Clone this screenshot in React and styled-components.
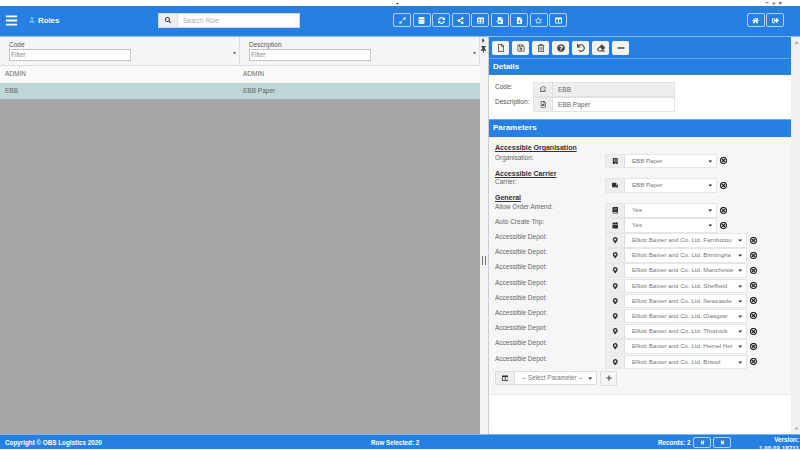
import styled, { createGlobalStyle } from 'styled-components'
import {
  FaBars, FaUser, FaSearch, FaExpandAlt, FaDatabase, FaSyncAlt, FaShareAlt, FaTable, FaFileImport,
  FaFileDownload, FaRegStar, FaColumns, FaHome, FaSignOutAlt, FaRegFile, FaRegSave, FaRegTrashAlt,
  FaQuestionCircle, FaUndo, FaEraser, FaMinus, FaRegCommentDots, FaRegFileAlt, FaBuilding, FaTruck,
  FaBook, FaCalendar, FaMapMarkerAlt, FaRegTimesCircle, FaPlus, FaStepBackward, FaStepForward,
  FaThumbtack, FaCaretRight, FaCaretDown, FaCaretUp,
} from 'react-icons/fa'

const BLUE = '#2680e3'

const GlobalStyle = createGlobalStyle`
  html, body { margin: 0; padding: 0; background: #fff; }
  body { font-family: "Liberation Sans", Arial, sans-serif; }
  * { box-sizing: border-box; }
`

const Page = styled.div`
  width: 800px;
  height: 450px;
  display: flex;
  flex-direction: column;
  overflow: hidden;
  color: #555;
  font-size: 7px;
`

const TopStrip = styled.div`
  height: 6px;
  flex: none;
  display: flex;
  align-items: center;
  padding: 0 18px 0 395px;
  justify-content: space-between;
  color: #333;
  font-size: 5px;

  svg { display: block; }
`

const WindowControls = styled.div`
  display: flex;
  gap: 3px;
  font-size: 6px;
  font-weight: bold;
  line-height: 6px;
`

const Header = styled.header`
  height: 31px;
  flex: none;
  background: ${BLUE};
  border-bottom: 1px solid #8dbbef;
  display: flex;
  align-items: center;
  color: #fff;
  padding: 0 16px 2px 5px;
`

const Burger = styled(FaBars)`
  font-size: 13px;
  width: 13px;
`

const Title = styled.div`
  margin-left: 11px;
  width: 129px;
  display: flex;
  align-items: center;
  gap: 3px;
  font-size: 7.8px;
  font-weight: bold;

  svg { color: #5cb8f5; font-size: 6px; }
`

const Search = styled.div`
  width: 142px;
  height: 15px;
  display: flex;
  background: #fff;
  border: 1px solid #d5d5d5;
`

const SearchAddon = styled.div`
  width: 19px;
  background: #eee;
  border-right: 1px solid #ddd;
  color: #333;
  font-size: 6px;
  display: flex;
  align-items: center;
  justify-content: center;
`

const SearchText = styled.div`
  padding-left: 5px;
  color: #aaa;
  font-size: 6.5px;
  line-height: 13px;
`

const HeaderTools = styled.div`
  margin-left: 93px;
  display: flex;
  gap: 1.5px;
`

const HeaderButton = styled.div`
  width: 18px;
  height: 14px;
  border: 1px solid #b5d3f5;
  border-radius: 2px;
  color: #fff;
  font-size: 7px;
  display: flex;
  align-items: center;
  justify-content: center;
`

const HeaderEnd = styled(HeaderTools)`
  margin-left: auto;
`

const Main = styled.main`
  flex: 1;
  min-height: 0;
  display: flex;
`

const LeftPane = styled.section`
  width: 480px;
  flex: none;
  background: #a6a6a6;
`

const TableHead = styled.div`
  height: 29px;
  background: #f5f5f5;
  border-bottom: 1px solid #ddd;
  display: grid;
  grid-template-columns: 240px 240px;
`

const HeadCell = styled.div`
  position: relative;
  padding: 4px 0 0 9px;
  border-right: 1px solid #ddd;
  font-size: 6.5px;
  line-height: 8px;
  color: #555;
`

const SortMark = styled(FaCaretUp)`
  position: absolute;
  right: 2px;
  top: 13px;
  font-size: 5px;
  color: #444;
`

const FilterInput = styled.div`
  width: 122px;
  height: 12px;
  border: 1px solid #c4c4c4;
  background: #fff;
  color: #888;
  font-size: 6.5px;
  line-height: 10px;
  padding-left: 1px;
`

const TableRow = styled.div`
  height: ${(p) => (p.$selected ? '16px' : '17px')};
  background: ${(p) => (p.$selected ? '#bdd7d7' : '#fafafa')};
  display: grid;
  grid-template-columns: 238px 242px;
  align-items: center;
  padding: 0 0 1.5px 5px;
  font-size: 6.5px;
  color: #666;
`

const Splitter = styled.div`
  width: 9px;
  flex: none;
  background: #f2f2f2;
  border-right: 1px solid #ccc;
  display: flex;
  flex-direction: column;
  align-items: center;
  padding: 0 1px 0 0;
  color: #444;
  font-size: 7px;
  gap: 2px;
`

const SplitHandle = styled.div`
  margin-top: 201px;
  width: 4px;
  height: 9px;
  border-left: 1px solid #777;
  border-right: 1px solid #777;
`

const Detail = styled.section`
  width: 302px;
  flex: none;
  display: flex;
  flex-direction: column;
`

const DetailTools = styled.div`
  height: 21px;
  flex: none;
  background: ${BLUE};
  display: flex;
  align-items: center;
  gap: 3px;
  padding: 0 3px;
`

const ToolButton = styled.div`
  width: 17px;
  height: 14px;
  background: #f4f4f4;
  border-radius: 2px;
  color: #444;
  font-size: 8px;
  display: flex;
  align-items: center;
  justify-content: center;
`

const SectionBar = styled.h2`
  margin: 0;
  flex: none;
  height: ${(p) => p.$height}px;
  background: ${BLUE};
  border-top: 1px solid #6aa8ec;
  color: #fff;
  font-size: 8px;
  font-weight: bold;
  line-height: ${(p) => p.$height - 2}px;
  padding-left: 4px;
`

const DetailsBody = styled.div`
  height: 44px;
  flex: none;
  background: #fff;
  padding: 7px 0 0 6px;
  display: grid;
  grid-template-columns: 38px 142px;
  grid-auto-rows: 15px;
  font-size: 6.5px;
`

const FieldLabel = styled.div`
  line-height: 8px;
  padding-top: 1px;
  white-space: nowrap;
`

const ReadField = styled.div`
  display: flex;
  border: 1px solid #e2e2e2;
  background: ${(p) => (p.$grey ? '#eee' : '#fff')};
  height: 15px;
`

const FieldIcon = styled.div`
  width: 19px;
  flex: none;
  background: #eee;
  border-right: 1px solid #ddd;
  display: flex;
  align-items: center;
  justify-content: center;
  color: #333;
  font-size: 6.5px;
`

const FieldValue = styled.div`
  padding-left: 5px;
  line-height: 13px;
  color: #666;
`

const ParamsBody = styled.div`
  flex: none;
  height: 257px;
  background: #f6f6f6;
  padding: 6px 0 0 6px;
  font-size: 6.5px;
`

const GroupHead = styled.div`
  height: ${(p) => p.$height}px;
  font-size: 7px;
  font-weight: bold;
  line-height: 9px;
  color: #333;
  text-decoration: underline;
`

const ParamRow = styled.div`
  height: ${(p) => (p.$depot ? '15.2px' : '15px')};
  display: flex;
  align-items: flex-start;
`

const ParamLabel = styled.div`
  width: 110px;
  flex: none;
  line-height: 8px;
  color: #666;
`

const ParamSelect = styled.div`
  width: ${(p) => (p.$wide ? '142px' : '112px')};
  height: 14.5px;
  flex: none;
  display: flex;
  border: 1px solid #e6e6e6;
  background: #fff;
`

const SelectText = styled.div`
  flex: 1;
  min-width: 0;
  margin-left: 7px;
  white-space: nowrap;
  line-height: 12.5px;
  color: #777;
  font-size: 6.15px;
`

const Caret = styled(FaCaretDown)`
  flex: none;
  align-self: center;
  margin-right: 3px;
  font-size: 6.5px;
  color: #333;
`

const Remove = styled(FaRegTimesCircle)`
  flex: none;
  margin: 3.5px 0 0 3px;
  font-size: 7px;
  color: #111;
  stroke: currentColor;
  stroke-width: 40px;
`

const AddRow = styled.div`
  display: flex;
  align-items: center;
  gap: 3px;
  margin-top: 1px;
`

const AddSelect = styled(ParamSelect)`
  width: 102px;
  border-color: #ddd;
`

const AddText = styled(SelectText)`
  margin-right: 2px;
  font-size: 6.3px;
`

const AddButton = styled.div`
  width: 17px;
  height: 15px;
  border: 1px solid #ddd;
  border-radius: 1px;
  background: #f6f6f6;
  color: #444;
  font-size: 6px;
  display: flex;
  align-items: center;
  justify-content: center;
`

const DetailRest = styled.div`
  flex: 1;
  background: #fff;
  border-top: 1px solid #e8e8e8;
`

const Scrollbar = styled.div`
  width: 10px;
  flex: none;
  background: #f1f1f1;
  display: flex;
  flex-direction: column;
  justify-content: space-between;
  align-items: center;
  padding: 2px 0;
  color: #aaa;
  font-size: 7px;
`

const Footer = styled.footer`
  height: 15px;
  flex: none;
  margin-bottom: 1px;
  background: ${BLUE};
  border-top: 1px solid #7db3ee;
  color: #fff;
  font-weight: bold;
  font-size: 6.3px;
  display: flex;
  align-items: center;
  padding-left: 5px;
  overflow: hidden;
`

const Copyright = styled.div`
  width: 366px;
`

const RowSelected = styled.div`
  width: 287px;
`

const Records = styled.div`
  width: 35px;
`

const PageButton = styled.div`
  width: 18px;
  height: 11px;
  margin-right: 2px;
  border: 1px solid #b5d3f5;
  border-radius: 2px;
  font-size: 5px;
  display: flex;
  align-items: center;
  justify-content: center;
`

const Version = styled.div`
  margin-left: auto;
  width: 66px;
  flex: none;
  align-self: flex-start;
  text-align: right;
  line-height: 9px;
  padding-right: 1px;
`

const mainTools = [FaExpandAlt, FaDatabase, FaSyncAlt, FaShareAlt, FaTable, FaFileImport, FaFileDownload, FaRegStar, FaColumns]
const detailTools = [FaRegFile, FaRegSave, FaRegTrashAlt, FaQuestionCircle, FaUndo, FaEraser, FaMinus]
const depots = ['Farnborou', 'Birmingha', 'Mancheste', 'Sheffield', 'Newcastle', 'Glasgow', 'Thurrock', 'Hemel Hei', 'Bristol']

const SelectField = ({ icon: Icon, text, wide }) => (
  <ParamSelect $wide={wide}>
    <FieldIcon><Icon /></FieldIcon>
    <SelectText>{text}</SelectText>
    <Caret />
  </ParamSelect>
)

const Param = ({ label, icon, text, wide }) => (
  <ParamRow $depot={wide}>
    <ParamLabel>{label}</ParamLabel>
    <SelectField icon={icon} text={text} wide={wide} />
    <Remove />
  </ParamRow>
)

export default function App() {
  return (
    <Page>
      <GlobalStyle />
      <TopStrip>
        <FaCaretDown />
        <WindowControls>
          <span>−</span>
          <span>+</span>
          <span>×</span>
        </WindowControls>
      </TopStrip>
      <Header>
        <Burger />
        <Title><FaUser />Roles</Title>
        <Search>
          <SearchAddon><FaSearch /></SearchAddon>
          <SearchText>Search Role</SearchText>
        </Search>
        <HeaderTools>
          {mainTools.map((Icon, i) => (
            <HeaderButton key={i}><Icon /></HeaderButton>
          ))}
        </HeaderTools>
        <HeaderEnd>
          <HeaderButton><FaHome /></HeaderButton>
          <HeaderButton><FaSignOutAlt /></HeaderButton>
        </HeaderEnd>
      </Header>
      <Main>
        <LeftPane>
          <TableHead>
            <HeadCell>
              Code
              <FilterInput>Filter</FilterInput>
              <SortMark />
            </HeadCell>
            <HeadCell>
              Description
              <FilterInput>Filter</FilterInput>
              <SortMark />
            </HeadCell>
          </TableHead>
          <TableRow>
            <span>ADMIN</span>
            <span>ADMIN</span>
          </TableRow>
          <TableRow $selected>
            <span>EBB</span>
            <span>EBB Paper</span>
          </TableRow>
        </LeftPane>
        <Splitter>
          <FaCaretRight />
          <FaThumbtack />
          <SplitHandle />
        </Splitter>
        <Detail>
          <DetailTools>
            {detailTools.map((Icon, i) => (
              <ToolButton key={i}><Icon /></ToolButton>
            ))}
          </DetailTools>
          <SectionBar $height={17}>Details</SectionBar>
          <DetailsBody>
            <FieldLabel>Code:</FieldLabel>
            <ReadField $grey>
              <FieldIcon><FaRegCommentDots /></FieldIcon>
              <FieldValue>EBB</FieldValue>
            </ReadField>
            <FieldLabel>Description:</FieldLabel>
            <ReadField>
              <FieldIcon><FaRegFileAlt /></FieldIcon>
              <FieldValue>EBB Paper</FieldValue>
            </ReadField>
          </DetailsBody>
          <SectionBar $height={18}>Parameters</SectionBar>
          <ParamsBody>
            <GroupHead $height={10.5}>Accessible Organisation</GroupHead>
            <Param label="Organisation:" icon={FaBuilding} text="EBB Paper" />
            <GroupHead $height={9.5}>Accessible Carrier</GroupHead>
            <Param label="Carrier:" icon={FaTruck} text="EBB Paper" />
            <GroupHead $height={10}>General</GroupHead>
            <Param label="Allow Order Amend:" icon={FaBook} text="Yes" />
            <Param label="Auto Create Trip:" icon={FaCalendar} text="Yes" />
            {depots.map((depot) => (
              <Param
                key={depot}
                label="Accessible Depot:"
                icon={FaMapMarkerAlt}
                text={`Elliott Baxter and Co. Ltd. ${depot}`}
                wide
              />
            ))}
            <AddRow>
              <AddSelect>
                <FieldIcon><FaColumns /></FieldIcon>
                <AddText>-- Select Parameter --</AddText>
                <Caret />
              </AddSelect>
              <AddButton><FaPlus /></AddButton>
            </AddRow>
          </ParamsBody>
          <DetailRest />
        </Detail>
        <Scrollbar>
          <FaCaretUp />
          <FaCaretDown />
        </Scrollbar>
      </Main>
      <Footer>
        <Copyright>Copyright © OBS Logistics 2020</Copyright>
        <RowSelected>Row Selected: 2</RowSelected>
        <Records>Records: 2</Records>
        <PageButton><FaStepBackward /></PageButton>
        <PageButton><FaStepForward /></PageButton>
        <Version>Version:<br />1.00.03.18711</Version>
      </Footer>
    </Page>
  )
}
